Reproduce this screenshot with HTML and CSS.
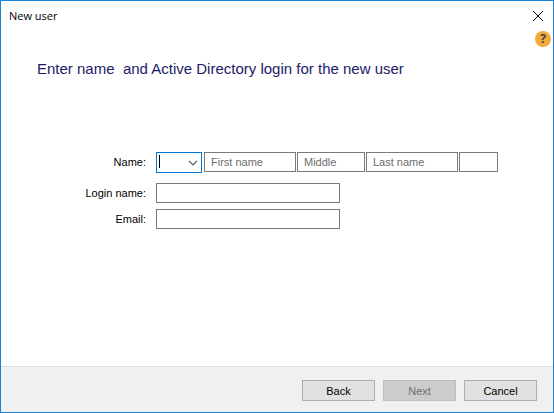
FILE: index.html
```html
<!DOCTYPE html>
<html lang="en">
<head>
<meta charset="utf-8">
<title>New user</title>
<link rel="stylesheet" href="styles.css">
</head>
<body>
<form class="dialog">
  <header class="titlebar">
    <span class="title">New user</span>
    <button class="close" type="button" aria-label="Close">
      <svg width="12" height="12" viewBox="0 0 12 12"><path d="M1 1l10 10M11 1L1 11" stroke="#000" stroke-width="1" fill="none"/></svg>
    </button>
  </header>
  <div class="help-row">
    <button class="help" type="button" aria-label="Help">?</button>
  </div>
  <main class="content">
    <h1 class="heading">Enter name&nbsp; and Active Directory login for the new user</h1>
    <div class="fields">
      <label class="label" for="salutation">Name:</label>
      <div class="name-row">
        <div class="combo">
          <select id="salutation"><option></option></select>
          <span class="caret"></span>
          <svg class="chevron" width="10" height="6" viewBox="0 0 10 6"><path d="M1 .8l4 4 4-4" stroke="#555" stroke-width="1.2" fill="none"/></svg>
        </div>
        <div class="parts">
          <input class="box wide" type="text" placeholder="First name" aria-label="First name">
          <input class="box middle" type="text" placeholder="Middle" aria-label="Middle">
          <input class="box wide" type="text" placeholder="Last name" aria-label="Last name">
          <input class="box suffix" type="text" aria-label="Suffix">
        </div>
      </div>
      <label class="label" for="login">Login name:</label>
      <input class="box long" id="login" type="text">
      <label class="label" for="email">Email:</label>
      <input class="box long" id="email" type="text">
    </div>
  </main>
  <footer class="footer">
    <button class="btn" type="button">Back</button>
    <button class="btn" type="button" disabled>Next</button>
    <button class="btn" type="button">Cancel</button>
  </footer>
</form>
</body>
</html>
```
FILE: styles.css
```css
* {
  box-sizing: border-box;
}

body {
  margin: 0;
  font-family: "Liberation Sans", Arial, sans-serif;
  font-size: 11px;
  color: #000;
}

.dialog {
  display: flex;
  flex-direction: column;
  min-height: 100vh;
  border: 1px solid #1883d7;
  background: #fff;
}

.titlebar {
  display: flex;
  align-items: center;
  justify-content: space-between;
  height: 29px;
  padding: 0 9px 0 8px;
}

.title {
  font-family: "Open Sans", "Noto Sans", sans-serif;
}

.close,
.help {
  display: flex;
  align-items: center;
  justify-content: center;
  padding: 0;
  border: 0;
  background: none;
}

.help-row {
  display: flex;
  justify-content: flex-end;
  height: 17px;
  padding-right: 2px;
}

.help {
  width: 16px;
  height: 16px;
  margin-top: 1px;
  border-radius: 50%;
  background: #f3a93c;
  color: #3b4450;
  font: bold 12px/16px "Open Sans", sans-serif;
}

.content {
  flex: 1;
  padding: 12px 36px;
}

.heading {
  margin: 0;
  font-size: 15px;
  font-weight: 400;
  line-height: 20px;
  color: #1b1b69;
}

.fields {
  display: grid;
  grid-template-columns: 109px 1fr;
  column-gap: 10px;
  margin-top: 73px;
}

.label {
  line-height: 20px;
  text-align: right;
}

.name-row {
  display: flex;
  align-items: flex-start;
  gap: 2px;
  margin-bottom: 10px;
}

.parts {
  display: flex;
  gap: 1px;
}

.combo {
  position: relative;
}

.combo select {
  display: block;
  width: 46px;
  height: 21px;
  border: 1px solid #0078d7;
  border-radius: 0;
  background: #fff;
  appearance: none;
  font: inherit;
}

.caret {
  position: absolute;
  top: 3px;
  left: 3px;
  width: 1px;
  height: 13px;
  background: #000;
}

.chevron {
  position: absolute;
  top: 8px;
  right: 4px;
}

.box {
  height: 20px;
  padding: 0 6px;
  border: 1px solid #7a7a7a;
  background: #fff;
  font: inherit;
}

.box::placeholder {
  color: #6d6d6d;
}

.wide {
  width: 92px;
}

.middle {
  width: 68px;
}

.suffix {
  width: 39px;
}

.long {
  width: 184px;
  margin-bottom: 6px;
}

.footer {
  display: flex;
  justify-content: flex-end;
  gap: 8px;
  padding: 13px 16px 11px;
  border-top: 1px solid #dfdfdf;
  background: #f0f0f0;
}

.btn {
  width: 73px;
  height: 21px;
  padding: 0;
  border: 1px solid #adadad;
  background: #e1e1e1;
  font: inherit;
  color: #000;
}

.btn:disabled {
  border-color: #bfbfbf;
  background: #ccc;
  color: #6d6d6d;
}
```
